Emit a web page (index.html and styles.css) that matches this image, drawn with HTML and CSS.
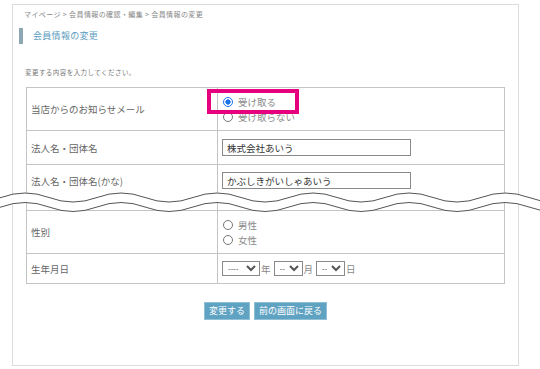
FILE: index.html
```html
<!DOCTYPE html>
<html lang="ja">
<head>
    <meta charset="UTF-8">
    <meta name="viewport" content="width=device-width, initial-scale=1.0">
    <title>会員情報の変更</title>
    <link rel="stylesheet" href="styles.css">
</head>
<body>
    <div class="page">
        <p class="crumbs">マイページ &gt; 会員情報の確認・編集 &gt; 会員情報の変更</p>
        <h2 class="title">会員情報の変更</h2>
        <p class="lead">変更する内容を入力してください。</p>

        <table class="form-table">
            <tr class="row-tall">
                <th>当店からのお知らせメール</th>
                <td>
                    <label class="opt"><input type="radio" name="mail" checked>受け取る</label>
                    <label class="opt"><input type="radio" name="mail">受け取らない</label>
                </td>
            </tr>
            <tr class="row-text">
                <th>法人名・団体名</th>
                <td><input type="text" class="field" value="株式会社あいう"></td>
            </tr>
            <tr class="row-cut">
                <th>法人名・団体名(かな)</th>
                <td><input type="text" class="field" value="かぶしきがいしゃあいう"></td>
            </tr>
            <tr class="row-tall">
                <th>性別</th>
                <td>
                    <label class="opt"><input type="radio" name="sex">男性</label>
                    <label class="opt"><input type="radio" name="sex">女性</label>
                </td>
            </tr>
            <tr class="row-date">
                <th>生年月日</th>
                <td>
                    <div class="date">
                        <select class="sel-year"><option>----</option></select><span>年</span>
                        <select class="sel-small"><option>--</option></select><span>月</span>
                        <select class="sel-small"><option>--</option></select><span>日</span>
                    </div>
                </td>
            </tr>
        </table>

        <div class="actions">
            <button>変更する</button>
            <button>前の画面に戻る</button>
        </div>
    </div>

    <!-- annotation box -->
    <div class="mark"></div>

    <!-- omitted section -->
    <svg class="cut" width="540" height="34" viewBox="0 0 540 34">
        <defs>
            <path id="wave" d="M-95 0 q24 -9 48 0 t48 0 t48 0 t48 0 t48 0 t48 0 t48 0 t48 0 t48 0 t48 0 t48 0 t48 0 t48 0 t48 0 t48 0 t48 0"/>
        </defs>
        <use href="#wave" transform="translate(0 19.25)" fill="none" stroke="#fff" stroke-width="10"/>
        <use href="#wave" transform="translate(0 14.5)" fill="none" stroke="#555" stroke-width="1"/>
        <use href="#wave" transform="translate(0 24)" fill="none" stroke="#555" stroke-width="1"/>
    </svg>
</body>
</html>
```

FILE: styles.css
```css
body {
    margin: 0;
    background: #fff;
    font-family: "Noto Sans CJK JP", "Noto Sans", sans-serif;
    color: #666;
    position: relative;
    width: 540px;
    height: 369px;
    overflow: hidden;
}
.page {
    box-sizing: border-box;
    margin: 4px 0 0 12px;
    width: 507px;
    height: 362px;
    border: 1px solid #dcdcdc;
}
.crumbs {
    margin: 4px 0 0 11px;
    font-size: 7px;
    line-height: 10px;
    letter-spacing: 0.4px;
    color: #888;
}
.title {
    margin: 9px 0 0 6px;
    height: 16px;
    border-left: 4px solid #8ea7b5;
    padding-left: 10px;
    font-size: 9px;
    line-height: 16px;
    font-weight: normal;
    letter-spacing: 0.3px;
    color: #5b9cc0;
}
.lead {
    margin: 23px 0 0 12px;
    font-size: 6.5px;
    line-height: 10px;
    letter-spacing: 0.45px;
    color: #777;
}
.form-table {
    margin: 10px 0 0 13px;
    width: 479px;
    border-collapse: collapse;
    font-size: 9.5px;
}
.form-table th,
.form-table td {
    border: 1px solid #c4c4c4;
    padding: 0 4px;
    text-align: left;
}
.form-table th {
    width: 182px;
    font-weight: normal;
    color: #666;
}
.form-table td {
    padding-left: 4px;
}
.row-tall th, .row-tall td {
    height: 42px;
}
.row-text th, .row-text td {
    height: 33px;
}
.row-cut th, .row-cut td {
    height: 46px;
    vertical-align: top;
    padding-top: 7px;
    box-sizing: border-box;
}
.row-cut th {
    padding-top: 9px;
}
.row-date th, .row-date td {
    height: 29px;
}
.opt {
    display: flex;
    align-items: center;
    height: 15px;
    color: #8a8a8a;
}
.opt input {
    appearance: none;
    -webkit-appearance: none;
    box-sizing: border-box;
    width: 10px;
    height: 10px;
    margin: 0 5px 0 1px;
    border: 1px solid #777;
    border-radius: 50%;
    background: #fff;
}
.opt input:checked {
    border-color: #1a73e8;
    background: radial-gradient(circle, #1a73e8 0 2.4px, #fff 2.9px);
}
.field {
    box-sizing: border-box;
    width: 189px;
    height: 17px;
    margin: 0;
    padding: 0 4px;
    border: 1px solid #8a8a8a;
    font-family: inherit;
    font-size: 9.5px;
    color: #333;
}
.date {
    display: flex;
    align-items: center;
    color: #888;
}
.date select {
    box-sizing: border-box;
    height: 15px;
    margin: 0 1px 0 3px;
    padding: 0 1px;
    border: 1px solid #8a8a8a;
    border-radius: 0;
    font-family: "Liberation Sans", sans-serif;
    font-size: 8px;
    color: #555;
    background: #fff;
}
.date select:first-child {
    margin-left: 0;
}
.sel-year {
    width: 38px;
}
.sel-small {
    width: 29px;
}
.actions {
    display: flex;
    justify-content: center;
    gap: 4px;
    margin-top: 18px;
}
.actions button {
    box-sizing: border-box;
    height: 18px;
    padding: 0 4px;
    border: 1px solid #8fc0d6;
    background: #5fa2c2;
    color: #fff;
    font-family: inherit;
    font-size: 9px;
    line-height: 16px;
}
.mark {
    position: absolute;
    left: 207px;
    top: 89px;
    width: 92px;
    height: 25px;
    box-sizing: border-box;
    border: 4px solid #e6007e;
}
.cut {
    position: absolute;
    left: 0;
    top: 183px;
}
```
